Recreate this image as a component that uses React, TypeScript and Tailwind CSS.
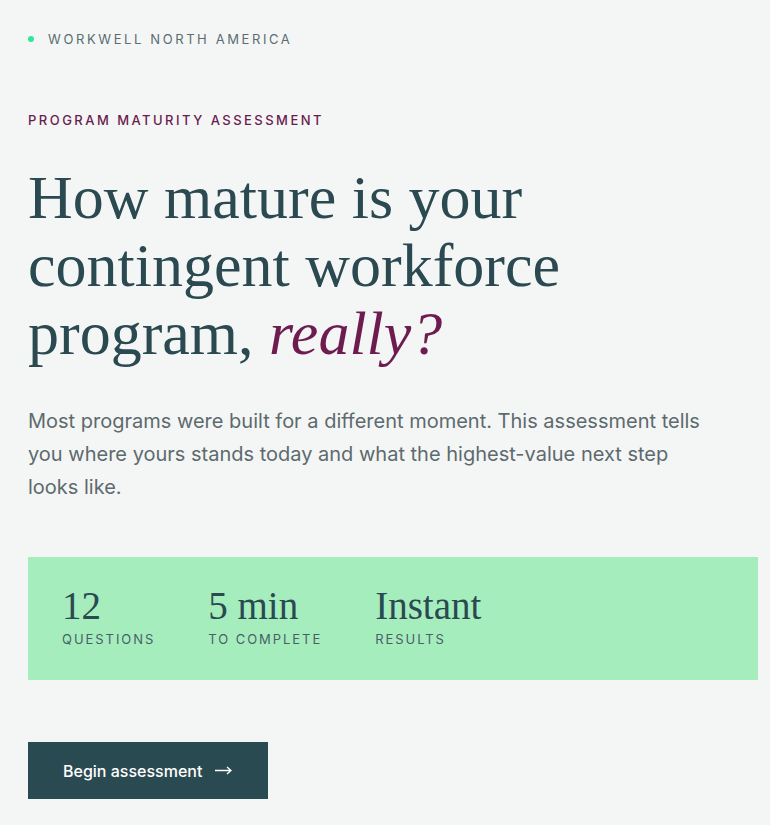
export default function App() {
  const stats = [
    { value: "12", label: "Questions" },
    { value: "5 min", label: "To complete" },
    { value: "Instant", label: "Results" },
  ];

  return (
    <div className="min-h-[825px] bg-[#f4f6f5] pl-[28px] pr-[12px] pt-[31px] font-['Inter',sans-serif]">
      {/* Brand line */}
      <div className="flex items-center gap-[14px]">
        <span className="h-[6px] w-[6px] rounded-full bg-[#2ee89a]" />
        <span className="text-[13px] leading-[16px] tracking-[0.2em] text-[#5b6c72]">
          WORKWELL NORTH AMERICA
        </span>
      </div>

      <p className="mt-[65px] text-[13px] font-medium leading-[16px] tracking-[0.19em] text-[#6b1b4f]">
        PROGRAM MATURITY ASSESSMENT
      </p>

      <h1 className="mt-[35px] font-['Liberation_Serif',serif] text-[62px] leading-[68px] text-[#2a4950]">
        How mature is your
        <br />
        contingent workforce
        <br />
        program, <em className="text-[#6e1c50]">really?</em>
      </h1>

      <p className="mt-[38px] max-w-[685px] text-[20px] leading-[33px] text-[#5d6a6e]">
        Most programs were built for a different moment. This assessment tells you where yours
        stands today and what the highest-value next step looks like.
      </p>

      {/* Quick facts */}
      <div className="mt-[53px] flex h-[123px] items-start gap-[53px] bg-[#a6edbe] pl-[34px] pt-[27px]">
        {stats.map((s) => (
          <div key={s.label} className="flex flex-col">
            <span className="font-['Liberation_Serif',serif] text-[39px] leading-[44px] text-[#2a4950]">
              {s.value}
            </span>
            <span className="mt-[3px] text-[13px] uppercase leading-[16px] tracking-[0.15em] text-[#486166]">
              {s.label}
            </span>
          </div>
        ))}
      </div>

      <button className="mt-[62px] flex h-[57px] w-[240px] items-center gap-[13px] bg-[#2a4a52] pl-[35px] text-[16px] font-medium text-white">
        Begin assessment
        <svg width="17" height="9" viewBox="0 0 17 9" fill="none" stroke="currentColor" strokeWidth="1.3">
          <path d="M0 4.5H16M12 1L16 4.5L12 8" />
        </svg>
      </button>
    </div>
  );
}
